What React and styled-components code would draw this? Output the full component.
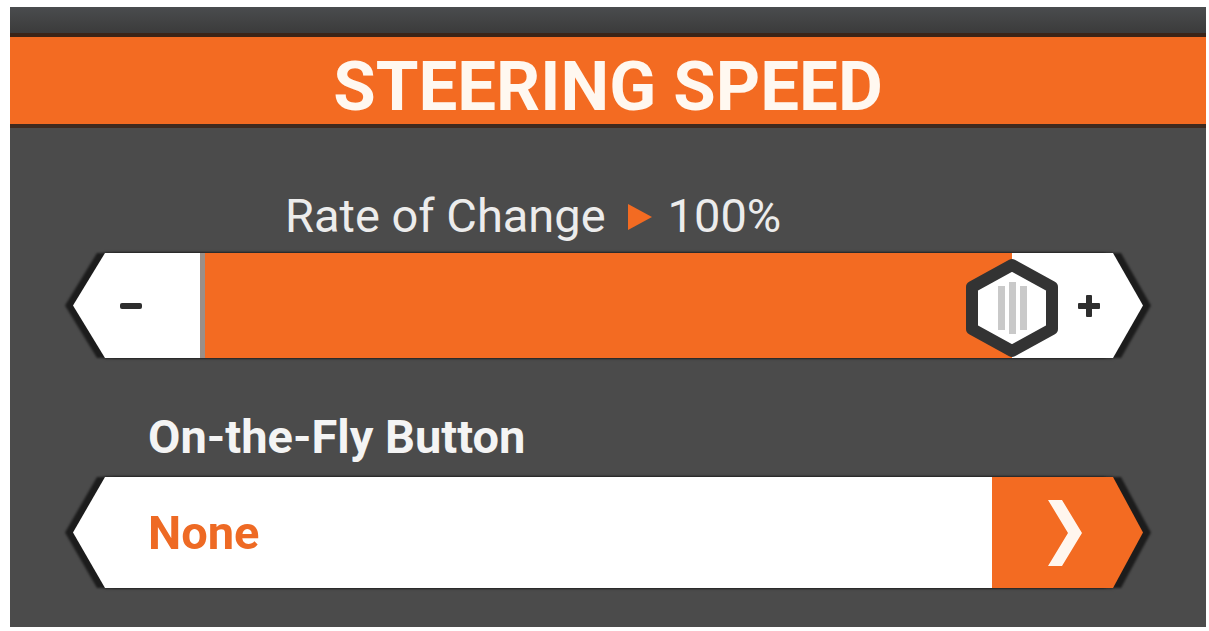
import React from "react";
import styled, { createGlobalStyle } from "styled-components";

const GlobalStyle = createGlobalStyle`
  body {
    margin: 0;
    background: #ffffff;
    font-family: Roboto, "Liberation Sans", sans-serif;
  }
`;

const ORANGE = "#f36b22";

const Page = styled.div`
  padding: 7px 3px 4px 10px;
`;

const Panel = styled.div`
  width: 1196px;
  height: 620px;
  background: #4b4b4b;
  display: flex;
  flex-direction: column;
`;

const TopBand = styled.div`
  height: 26px;
  background: linear-gradient(#4a4c4e, #3b3b3b);
  border-bottom: 4px solid #3b2417;
`;

const Header = styled.div`
  height: 72px;
  padding-top: 15px;
  background: ${ORANGE};
  border-bottom: 4px solid #3d2a20;
  display: flex;
  align-items: flex-start;
  justify-content: center;
`;

const Title = styled.h1`
  margin: 0;
  color: #fff8f0;
  font-size: 69px;
  line-height: 70px;
  font-weight: 700;
`;

const Body = styled.div`
  padding: 0 63px;
  display: flex;
  flex-direction: column;
`;

const RateRow = styled.div`
  margin-top: 60px;
  padding-left: 212px;
  height: 56px;
  line-height: 56px;
  display: flex;
  align-items: center;
  color: #ececec;
  font-size: 47px;
`;

const Triangle = styled.span`
  width: 0;
  height: 0;
  border-top: 13px solid transparent;
  border-bottom: 13px solid transparent;
  border-left: 24px solid ${ORANGE};
  margin: 2px 16px 0 22px;
`;

const Shadowed = styled.div`
  filter: drop-shadow(-8px 0 1px #1c1c1c) drop-shadow(8px 0 1px #1c1c1c);
  position: relative;
`;

const ArrowShape = styled.div`
  height: ${(p) => p.$h}px;
  display: flex;
  clip-path: polygon(
    32px 0,
    calc(100% - 30px) 0,
    100% 50%,
    calc(100% - 30px) 100%,
    32px 100%,
    0 50%
  );
`;

const Track = styled(Shadowed)`
  margin-top: 9px;
`;

const Cap = styled.div`
  background: #ffffff;
  width: ${(p) => p.$w}px;
  display: flex;
  align-items: center;
  padding-left: ${(p) => p.$pad}px;
  box-sizing: border-box;
`;

const Divider = styled.div`
  width: 5px;
  background: #9a8f88;
`;

const Fill = styled.div`
  flex: 1;
  background: ${ORANGE};
`;

const Minus = styled.span`
  width: 22px;
  height: 6px;
  border-radius: 2px;
  background: #2e2e2e;
`;

const Plus = styled.span`
  position: relative;
  width: 22px;
  height: 22px;
  &::before,
  &::after {
    content: "";
    position: absolute;
    background: #2e2e2e;
    border-radius: 1px;
  }
  &::before {
    left: 0;
    right: 0;
    top: 8px;
    height: 6px;
  }
  &::after {
    top: 0;
    bottom: 0;
    left: 8px;
    width: 6px;
  }
`;

const Knob = styled.svg`
  position: absolute;
  top: 5px;
  right: 82px;
`;

const FieldLabel = styled.div`
  margin-top: 51px;
  padding-left: 75px;
  color: #f4f4f4;
  font-size: 47px;
  line-height: 56px;
  font-weight: 700;
  height: 56px;
`;

const Select = styled(Shadowed)`
  margin-top: 12px;
`;

const SelectValue = styled.div`
  flex: 1;
  background: #ffffff;
  display: flex;
  align-items: center;
  padding-left: 75px;
  color: #ee6a24;
  font-size: 47px;
  font-weight: 700;
`;

const SelectButton = styled.div`
  width: 151px;
  background: ${ORANGE};
  display: flex;
  align-items: center;
  padding-left: 55px;
  box-sizing: border-box;
`;

const HexKnob = () => (
  <Knob width="98" height="100" viewBox="0 0 98 100">
    <polygon
      points="49,7 89,29 89,71 49,93 9,71 9,29"
      fill="#ffffff"
      stroke="#333333"
      strokeWidth="12"
      strokeLinejoin="round"
    />
    <rect x="35" y="28" width="7" height="44" fill="#c9c9c9" />
    <rect x="46" y="24" width="7" height="52" fill="#c9c9c9" />
    <rect x="57" y="28" width="7" height="44" fill="#c9c9c9" />
  </Knob>
);

const Chevron = () => (
  <svg width="36" height="66" viewBox="0 0 36 66">
    <polygon points="1,0 15,0 35,33 15,66 1,66 21,33" fill="#fff6ee" />
  </svg>
);

export default function App() {
  return (
    <Page>
      <GlobalStyle />
      <Panel>
        <TopBand />
        <Header>
          <Title>STEERING SPEED</Title>
        </Header>
        <Body>
          <RateRow>
            <span>Rate of Change</span>
            <Triangle />
            <span>100%</span>
          </RateRow>
          <Track>
            <ArrowShape $h={105}>
              <Cap $w={127} $pad={47}>
                <Minus />
              </Cap>
              <Divider />
              <Fill />
              <Cap $w={131} $pad={66}>
                <Plus />
              </Cap>
            </ArrowShape>
            <HexKnob />
          </Track>
          <FieldLabel>On-the-Fly Button</FieldLabel>
          <Select>
            <ArrowShape $h={111}>
              <SelectValue>None</SelectValue>
              <SelectButton>
                <Chevron />
              </SelectButton>
            </ArrowShape>
          </Select>
        </Body>
      </Panel>
    </Page>
  );
}
